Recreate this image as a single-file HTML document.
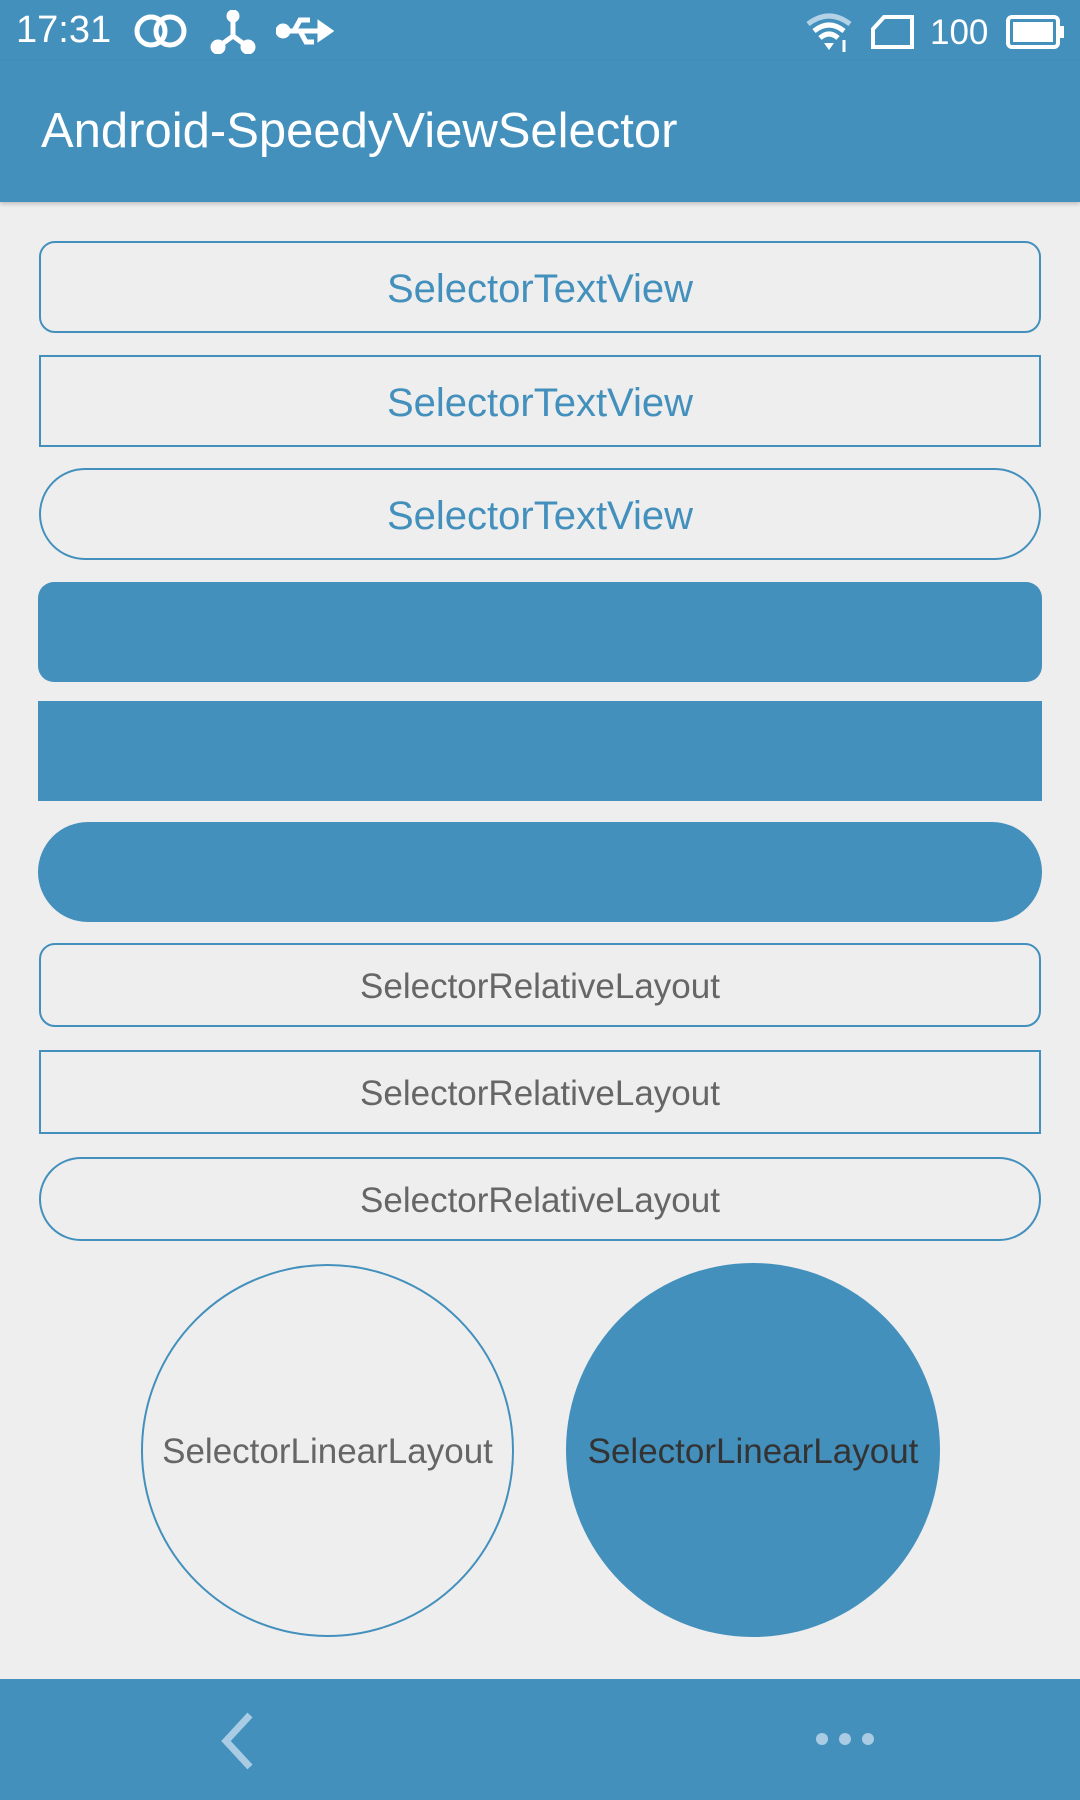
<!DOCTYPE html>
<html><head><meta charset="utf-8"><style>
*{margin:0;padding:0;box-sizing:border-box}
body{width:1080px;height:1800px;background:#eeeeee;font-family:"Liberation Sans",sans-serif;position:relative;overflow:hidden}
.abs{position:absolute}
.sb{left:0;top:0;width:1080px;height:61px;background:#4390bd;color:#fff}
.ab{left:0;top:61px;width:1080px;height:141px;background:#4390bd;color:#fff;font-size:49px;padding-left:41px;line-height:141px;box-shadow:0 2px 4px rgba(0,0,0,.2)}
.b{left:39px;width:1002px;border:2.5px solid #4390bd;display:flex;align-items:center;justify-content:center}
.tv{color:#4390bd;font-size:40px;height:92px;padding-top:4px}
.rl{color:#666;font-size:35px;height:84px;padding-top:3px}
.f{left:38px;width:1004px;height:100px;background:#4390bd}
.c{border-radius:50%;display:flex;align-items:center;justify-content:center;font-size:35px;padding-top:3px}
.nb{left:0;top:1679px;width:1080px;height:121px;background:#4390bd}
</style></head><body>
<div class="abs sb">
<div class="abs" style="left:16px;top:9px;font-size:38px">17:31</div>
<svg class="abs" style="left:134px;top:14px" width="54" height="34"><circle cx="17" cy="17" r="14" fill="none" stroke="#fff" stroke-width="5"/><circle cx="36" cy="17" r="14" fill="none" stroke="#fff" stroke-width="5"/></svg>
<svg class="abs" style="left:210px;top:10px" width="46" height="44" stroke="#fff" stroke-width="5" fill="#fff"><line x1="23" y1="6" x2="23" y2="26"/><line x1="23" y1="26" x2="8" y2="37"/><line x1="23" y1="26" x2="38" y2="37"/><circle cx="23" cy="6" r="4"/><circle cx="8" cy="37" r="5"/><circle cx="38" cy="37" r="5"/></svg>
<svg class="abs" style="left:276px;top:14px" width="58" height="34" stroke="#fff" stroke-width="5" fill="none"><circle cx="7" cy="17" r="5" fill="#fff"/><line x1="7" y1="17" x2="46" y2="17"/><path d="M18 17 L24 6 H34 M24 17 L30 28 H38"/><path d="M44 10 L54 17 L44 24Z" fill="#fff"/></svg>
<svg class="abs" style="left:806px;top:12px" width="46" height="40"><path d="M2 12 Q23 -4 44 12" stroke="#fff" stroke-width="5" fill="none" opacity=".6"/><path d="M8 19 Q23 7 38 19" stroke="#fff" stroke-width="5" fill="none"/><path d="M14 26 Q23 18 32 26" stroke="#fff" stroke-width="5" fill="none"/><path d="M18 31 L23 38 L28 31Z" fill="#fff"/><line x1="38" y1="28" x2="38" y2="40" stroke="#fff" stroke-width="3"/></svg>
<svg class="abs" style="left:870px;top:14px" width="46" height="36"><path d="M14 3 H42 V33 H3 V15Z" fill="none" stroke="#fff" stroke-width="4"/></svg>
<div class="abs" style="left:930px;top:13px;font-size:35px">100</div>
<svg class="abs" style="left:1006px;top:15px" width="60" height="34"><rect x="2" y="2" width="50" height="30" rx="4" fill="none" stroke="#fff" stroke-width="4"/><rect x="7" y="7" width="40" height="20" fill="#fff"/><rect x="53" y="11" width="5" height="12" fill="#fff"/></svg>
</div>
<div class="abs ab">Android-SpeedyViewSelector</div>
<div class="abs b tv" style="top:241px;border-radius:16px">SelectorTextView</div>
<div class="abs b tv" style="top:355px">SelectorTextView</div>
<div class="abs b tv" style="top:468px;border-radius:46px">SelectorTextView</div>
<div class="abs f" style="top:582px;border-radius:16px"></div>
<div class="abs f" style="top:701px"></div>
<div class="abs f" style="top:822px;border-radius:50px"></div>
<div class="abs b rl" style="top:943px;border-radius:16px">SelectorRelativeLayout</div>
<div class="abs b rl" style="top:1050px">SelectorRelativeLayout</div>
<div class="abs b rl" style="top:1157px;border-radius:42px">SelectorRelativeLayout</div>
<div class="abs c" style="left:141px;top:1264px;width:373px;height:373px;border:2.5px solid #4390bd;color:#666">SelectorLinearLayout</div>
<div class="abs c" style="left:566px;top:1263px;width:374px;height:374px;background:#4390bd;color:#333">SelectorLinearLayout</div>
<div class="abs nb">
<svg class="abs" style="left:218px;top:32px" width="40" height="60"><path d="M32 4 L8 30 L32 56" stroke="#a9cbe3" stroke-width="7" fill="none"/></svg>
<svg class="abs" style="left:814px;top:52px" width="62" height="16" fill="#a9cbe3"><circle cx="8" cy="8" r="6"/><circle cx="31" cy="8" r="6"/><circle cx="54" cy="8" r="6"/></svg>
</div>
</body></html>
